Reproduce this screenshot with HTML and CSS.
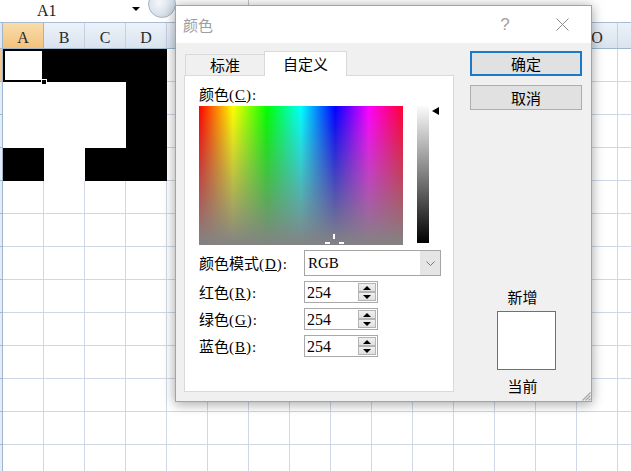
FILE: index.html
```html
<!DOCTYPE html>
<html lang="zh-CN">
<head>
<meta charset="utf-8">
<title>颜色</title>
<link rel="stylesheet" href="styles.css">
</head>
<body>
<div class="excel">
  <div class="formula-bar">
    <div class="namebox">A1</div>
    <div class="nb-arrow"></div>
    <div class="fx-btn"></div>
    <div class="fx-sep"></div>
  </div>
  <div class="col-headers">
    <div class="corner"></div>
    <div class="ch ch-sel">A</div>
    <div class="ch">B</div>
    <div class="ch">C</div>
    <div class="ch">D</div>
    <div class="ch"></div>
    <div class="ch"></div>
    <div class="ch"></div>
    <div class="ch"></div>
    <div class="ch"></div>
    <div class="ch"></div>
    <div class="ch"></div>
    <div class="ch"></div>
    <div class="ch"></div>
    <div class="ch"></div>
    <div class="ch">O</div>
    <div class="ch"></div>
  </div>
  <div class="sheet-body">
    <div class="row-hdr"><div class="rh-sel"></div></div>
    <div class="cells">
      <div class="cell-sel"><span class="fill-handle"></span></div>
      <div class="fill black b1-d1"></div>
      <div class="fill white a2-c3"></div>
      <div class="fill black d2-d4"></div>
      <div class="fill black a4"></div>
      <div class="fill white b4"></div>
      <div class="fill black c4"></div>
    </div>
  </div>
</div>

<div class="dialog">
  <div class="titlebar">
    <span class="title">颜色</span>
    <span class="help">?</span>
    <span class="close"><svg width="13" height="13" viewBox="0 0 13 13"><path d="M0.5 0.5L12.5 12.5M12.5 0.5L0.5 12.5" stroke="#8a8a8a" stroke-width="1" fill="none"/></svg></span>
  </div>
  <div class="dlg-body">
    <div class="left">
      <div class="tabs">
        <div class="tab">标准</div>
        <div class="tab tab-active">自定义</div>
      </div>
      <div class="panel">
        <div class="lbl">颜色<span class="hw">(<u>C</u>):</span></div>
        <div class="picker">
          <div class="spectrum">
            <span class="cross cross-v"></span>
            <span class="cross cross-l"></span>
            <span class="cross cross-r"></span>
          </div>
          <div class="lum"></div>
          <div class="lum-arrow"></div>
        </div>
        <div class="form">
          <div class="frow frow-mode">
            <label>颜色模式<span class="hw">(<u>D</u>):</span></label>
            <div class="select">
              <span class="val">RGB</span>
              <span class="dd"><svg width="9" height="5" viewBox="0 0 9 5"><path d="M0.5 0.5L4.5 4.5L8.5 0.5" fill="none" stroke="#7a7a7a" stroke-width="1"/></svg></span>
            </div>
          </div>
          <div class="frow">
            <label>红色<span class="hw">(<u>R</u>):</span></label>
            <div class="spin"><span class="val">254</span><span class="spin-btns"><span class="up"></span><span class="down"></span></span></div>
          </div>
          <div class="frow">
            <label>绿色<span class="hw">(<u>G</u>):</span></label>
            <div class="spin"><span class="val">254</span><span class="spin-btns"><span class="up"></span><span class="down"></span></span></div>
          </div>
          <div class="frow">
            <label>蓝色<span class="hw">(<u>B</u>):</span></label>
            <div class="spin"><span class="val">254</span><span class="spin-btns"><span class="up"></span><span class="down"></span></span></div>
          </div>
        </div>
      </div>
    </div>
    <div class="right">
      <button class="btn btn-default">确定</button>
      <button class="btn">取消</button>
      <div class="preview">
        <div class="cap">新增</div>
        <div class="swatch"></div>
        <div class="cap">当前</div>
      </div>
    </div>
  </div>
  <svg class="grip" width="10" height="10" viewBox="0 0 10 10"><path d="M9.5 1.5L1.5 9.5M9.5 4.5L4.5 9.5M9.5 7.5L7.5 9.5" stroke="#a8a8a8" stroke-width="1.2" fill="none"/></svg>
</div>
</body>
</html>
```

FILE: styles.css
```css
* { box-sizing: border-box; }
html, body { margin: 0; padding: 0; }
body {
  width: 631px;
  height: 471px;
  overflow: hidden;
  position: relative;
  background: #fff;
  font-family: "Noto Sans CJK SC", "Noto Sans", sans-serif;
}

/* ---------- spreadsheet ---------- */
.excel { width: 631px; height: 471px; overflow: hidden; }

.formula-bar {
  height: 23px;
  border-bottom: 1px solid #a9bcd3;
  display: flex;
  align-items: flex-start;
  overflow: hidden;
  background: #fff;
}
.namebox {
  width: 128px;
  flex: none;
  padding-left: 37px;
  font: 16px/21px "Liberation Serif", serif;
  color: #222;
}
.nb-arrow {
  flex: none;
  margin: 7px 0 0 4px;
  width: 0; height: 0;
  border-left: 4px solid transparent;
  border-right: 4px solid transparent;
  border-top: 4px solid #000;
}
.fx-btn {
  flex: none;
  width: 28px; height: 28px;
  margin: -10px 0 0 8px;
  border-radius: 50%;
  border: 1px solid #a6b4c6;
  background: radial-gradient(circle at 40% 45%, #f4f7fb, #c4d0de);
}
.fx-sep { flex: none; width: 1px; height: 22px; margin-left: 72px; background: #c4c4c4; }

.col-headers {
  display: flex;
  height: 26px;
  border-bottom: 1px solid #9eb6ce;
}
.corner { flex: none; width: 3px; background: #dfe7f1; border-right: 1px solid #9eb6ce; }
.ch {
  flex: none;
  width: 41px;
  border-right: 1px solid #c3d0e0;
  background: linear-gradient(#edf2f9, #d9e3ef);
  text-align: center;
  font: 16px/25px "Liberation Serif", serif;
  padding-top: 2px;
  color: #2a2a2a;
}
.ch-sel {
  background: linear-gradient(#f9dcaa, #f3c37c);
  border-right-color: #e5a75a;
}

.sheet-body { display: flex; }
.row-hdr {
  flex: none;
  width: 3px;
  height: 429px;
  border-right: 1px solid #9eb6ce;
  background-color: #e4ecf7;
  background-image: linear-gradient(to bottom, transparent 32px, #9eb6ce 32px);
  background-size: 100% 33px;
}
.rh-sel { height: 32px; background: #f5c888; }

.cells {
  flex: none;
  width: 656px;
  display: grid;
  grid-template-columns: repeat(16, 41px);
  grid-template-rows: repeat(13, 33px);
  background-color: #fff;
  background-image:
    linear-gradient(to right, transparent 40px, #d0d7e5 40px),
    linear-gradient(to bottom, transparent 32px, #d0d7e5 32px);
  background-size: 41px 100%, 100% 33px;
}
.fill.black { background: #000; }
.fill.white { background: #fff; }
.b1-d1 { grid-column: 2 / 5; grid-row: 1; }
.a2-c3 { grid-column: 1 / 4; grid-row: 2 / 4; }
.d2-d4 { grid-column: 4; grid-row: 2 / 5; }
.a4 { grid-column: 1; grid-row: 4; }
.b4 { grid-column: 2; grid-row: 4; }
.c4 { grid-column: 3; grid-row: 4; }

.cell-sel {
  grid-column: 1;
  grid-row: 1;
  position: relative;
  z-index: 2;
  background: #fff;
  border: 2px solid #000;
}
.fill-handle {
  position: absolute;
  right: -5px;
  bottom: -5px;
  width: 6px;
  height: 6px;
  background: #000;
  border: 1px solid #fff;
}

/* ---------- dialog ---------- */
.dialog {
  position: absolute;
  left: 175px;
  top: 5px;
  width: 417px;
  height: 397px;
  border: 1px solid #a3a3a3;
  background: #f0f0f0;
  box-shadow: 0 0 12px rgba(0,0,0,0.25), 0 4px 10px rgba(0,0,0,0.15);
  display: flex;
  flex-direction: column;
  font-size: 15px;
  color: #000;
}
.titlebar {
  flex: none;
  height: 37px;
  background: #fff;
  display: flex;
  align-items: center;
}
.title { padding-left: 7px; line-height: 20px; color: #9e9e9e; }
.help {
  margin-left: auto;
  width: 30px;
  text-align: center;
  font: 17px/20px "Liberation Sans", sans-serif;
  color: #a0a0a0;
}
.close {
  width: 36px;
  margin-left: 24px;
  margin-right: 11px;
  display: flex;
  justify-content: center;
}

.dlg-body {
  flex: 1;
  display: flex;
  gap: 16px;
  padding: 8px 9px 9px 8px;
}
.left { width: 270px; flex: none; display: flex; flex-direction: column; }
.tabs {
  display: flex;
  align-items: flex-end;
  height: 24px;
  padding-left: 1px;
}
.tab {
  width: 80px;
  height: 21px;
  border: 1px solid #d9d9d9;
  border-bottom: none;
  background: #f0f0f0;
  text-align: center;
  line-height: 19px;
}
.tab-active {
  width: 83px;
  height: 25px;
  margin-left: -1px;
  margin-bottom: -1px;
  padding-top: 2px;
  background: #fff;
  line-height: 20px;
  position: relative;
  z-index: 1;
}
.panel {
  height: 317px;
  border: 1px solid #d9d9d9;
  background: #fff;
  padding: 8px 0 0 14px;
}
.hw { font-family: "Liberation Serif", serif; font-size: 15px; letter-spacing: 1px; }
.lbl { height: 20px; line-height: 20px; margin-bottom: 2px; }

.picker { display: flex; align-items: flex-start; height: 139px; }
.spectrum {
  flex: none;
  position: relative;
  width: 204px;
  height: 139px;
  background:
    linear-gradient(to bottom, rgba(128,128,128,0), #838383),
    linear-gradient(to right, #ff0000, #ffff00, #00ff00, #00ffff, #0000ff, #ff00ff, #ff0033);
}
.cross { position: absolute; background: #fff; }
.cross-v { left: 134px; top: 128px; width: 2px; height: 5px; }
.cross-l { left: 126px; top: 136px; width: 5px; height: 2px; }
.cross-r { left: 140px; top: 136px; width: 5px; height: 2px; }
.lum {
  flex: none;
  width: 12px;
  height: 137px;
  margin-left: 14px;
  background: linear-gradient(#fbfbfb, #808080 50%, #000);
}
.lum-arrow {
  flex: none;
  width: 0; height: 0;
  margin: 1px 0 0 3px;
  border-top: 4px solid transparent;
  border-bottom: 4px solid transparent;
  border-right: 7px solid #000;
}

.form { margin-top: 5px; display: flex; flex-direction: column; gap: 5px; }
.frow { display: flex; align-items: center; height: 22px; }
.frow-mode { height: 26px; }
.frow label { width: 105px; flex: none; height: 20px; line-height: 20px; }
.select {
  width: 137px;
  height: 26px;
  border: 1px solid #a5a5a5;
  background: #fff;
  display: flex;
}
.select .val { flex: 1; padding-left: 3px; font: 15px/24px "Liberation Serif", serif; }
.dd { width: 20px; background: #e5e5e5; display: flex; align-items: center; justify-content: center; }
.spin {
  width: 74px;
  height: 22px;
  border: 1px solid #a9a9a9;
  background: #fff;
  display: flex;
}
.spin .val { flex: 1; padding: 1px 0 0 2px; font: 16px/19px "Liberation Serif", serif; }
.spin-btns { width: 18px; display: flex; flex-direction: column; margin: 1px 1px 1px 0; }
.spin-btns span {
  flex: 1;
  border: 1px solid #b4b4b4;
  background: linear-gradient(#f0f0f0, #e0e0e0);
  display: flex;
  align-items: center;
  justify-content: center;
}
.spin-btns .up::after {
  content: "";
  border-left: 4px solid transparent;
  border-right: 4px solid transparent;
  border-bottom: 4px solid #000;
}
.spin-btns .down::after {
  content: "";
  border-left: 4px solid transparent;
  border-right: 4px solid transparent;
  border-top: 4px solid #000;
}

.right { width: 112px; flex: none; display: flex; flex-direction: column; }
.btn {
  height: 25px;
  padding: 0;
  border: 1px solid #adadad;
  background: #e1e1e1;
  font: 15px/20px "Noto Sans CJK SC", sans-serif;
  color: #000;
}
.btn-default { border: 2px solid #1979ca; }
.btn + .btn { margin-top: 9px; }
.preview { margin-top: 177px; display: flex; flex-direction: column; align-items: center; }
.cap { line-height: 20px; padding-right: 7px; }
.swatch { width: 59px; height: 59px; border: 1px solid #707070; background: #fff; margin: 4px 0 6px; }

.grip { position: absolute; right: 0; bottom: 0; }
```
